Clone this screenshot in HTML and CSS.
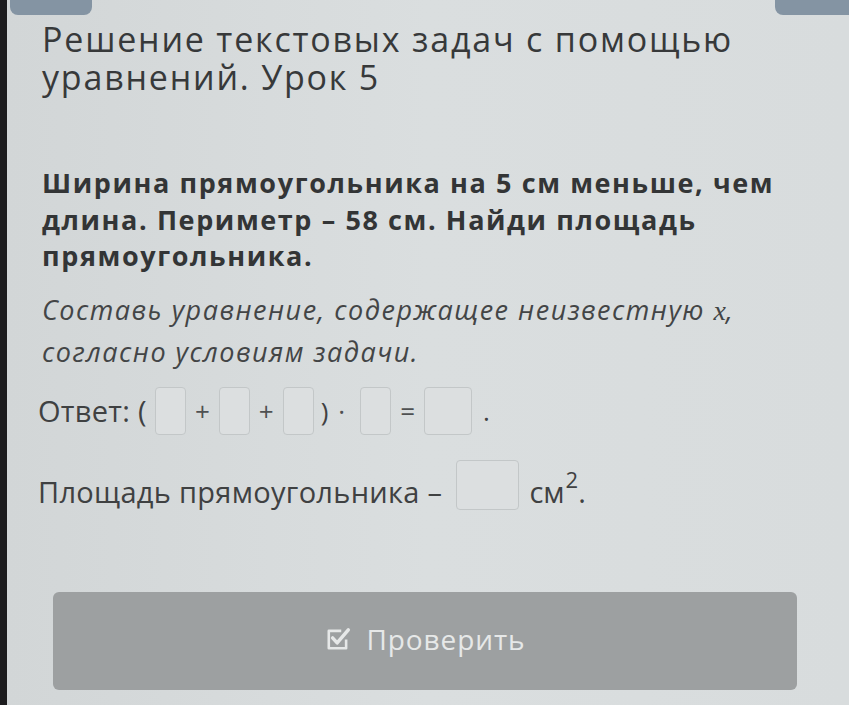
FILE: index.html
```html
<!DOCTYPE html>
<html lang="ru">
<head>
<meta charset="utf-8">
<title>Решение текстовых задач с помощью уравнений. Урок 5</title>
<link rel="stylesheet" href="styles.css">
</head>
<body>
<div class="frame">
  <div class="edge"></div>
  <main class="page">
    <div class="topbar">
      <span class="tab tab-left"></span>
      <span class="tab tab-right"></span>
    </div>
    <h1 class="title">Решение текстовых задач с помощью уравнений. Урок 5</h1>
    <p class="question">Ширина прямоугольника на 5 см меньше, чем длина. Периметр – 58 см. Найди площадь прямоугольника.</p>
    <p class="instruction">Составь уравнение, содержащее неизвестную <span class="var">x</span>, согласно условиям задачи.</p>
    <div class="answer">
      <span class="label">Ответ: (</span>
      <span class="box"></span>
      <span class="op">+</span>
      <span class="box"></span>
      <span class="op">+</span>
      <span class="box"></span>
      <span class="op paren">)</span>
      <span class="op dot">·</span>
      <span class="box after-dot"></span>
      <span class="op">=</span>
      <span class="box wide"></span>
      <span class="op end">.</span>
    </div>
    <div class="area">
      <span class="label">Площадь прямоугольника –</span>
      <span class="box big"></span>
      <span class="unit">см<sup>2</sup>.</span>
    </div>
    <div class="actions">
      <button class="check" type="button">
        <svg class="check-icon" viewBox="0 0 24 24" width="26" height="26" aria-hidden="true">
          <path d="M19.5 12.5V20.5H3.5V4.5H15" fill="none" stroke="currentColor" stroke-width="2.4" stroke-linejoin="round"/>
          <path d="M7 11l4.2 4.6L21.5 3.5" fill="none" stroke="currentColor" stroke-width="3.2" stroke-linecap="round" stroke-linejoin="round"/>
        </svg>
        <span>Проверить</span>
      </button>
    </div>
  </main>
</div>
</body>
</html>
```
FILE: styles.css
```css
* { box-sizing: border-box; }

html, body {
  margin: 0;
  height: 100%;
}

body {
  background: #d6dadb;
  font-family: "Open Sans", "Noto Sans", "DejaVu Sans", sans-serif;
  color: #3b3d3e;
  overflow: hidden;
}

.frame {
  display: flex;
  height: 705px;
}

.edge {
  width: 7px;
  background: #1c1c1e;
  flex: none;
}

.page {
  flex: 1;
  padding: 0 0 0 31px;
  background: linear-gradient(90deg, #d2d6d7 0%, #dadedf 50%, #d8dcdd 100%);
}

.topbar {
  display: flex;
  justify-content: space-between;
  height: 15px;
  margin-left: -28px;
}

.tab {
  display: block;
  height: 15px;
  background: #8494a3;
  border-radius: 0 0 8px 8px;
}

.tab-left { width: 82px; }
.tab-right { width: 74px; border-radius: 0 0 0 8px; }

.title {
  margin: 5px 0 0 4px;
  width: 780px;
  font-size: 34px;
  font-weight: 400;
  line-height: 38px;
  color: #37393a;
  letter-spacing: 1.8px;
}

.question {
  margin: 69px 0 0 4px;
  width: 790px;
  font-size: 27px;
  font-weight: 700;
  line-height: 36.5px;
  letter-spacing: 1.6px;
  color: #333536;
}

.instruction {
  margin: 14px 0 0 4px;
  width: 760px;
  font-size: 27px;
  font-style: italic;
  line-height: 42px;
  letter-spacing: 1.5px;
  color: #434546;
}

.var {
  font-family: "Liberation Serif", serif;
  font-style: italic;
  font-size: 28px;
  line-height: 1;
  letter-spacing: 0;
}

.answer {
  display: flex;
  align-items: center;
  margin-top: 13px;
  height: 50px;
}

.label {
  font-size: 29px;
  letter-spacing: 0.3px;
  color: #3f4142;
}

.answer .label { margin-right: 8px; }

.box {
  display: block;
  width: 31px;
  height: 48px;
  border: 1px solid #c3c7c8;
  border-radius: 4px;
  background: #dcdfe0;
  flex: none;
}

.box.wide { width: 48px; }
.box.big { width: 63px; height: 50px; }
.box.after-dot { margin-left: 15px; }

.op {
  font-size: 26px;
  color: #4f5152;
  margin: 0 9px;
}

.op.paren { margin: 0 0 0 7px; color: #3f4142; }
.op.dot { margin: 0 0 0 10px; }
.op.end { margin: 0 0 0 11px; color: #3f4142; }

.area {
  display: flex;
  align-items: flex-end;
  margin-top: 24px;
}

.area .label {
  margin-right: 14px;
  line-height: 29px;
  padding-bottom: 4px;
}

.unit {
  font-size: 29px;
  line-height: 29px;
  padding-bottom: 4px;
  color: #3f4142;
  margin-left: 10px;
}

.unit sup {
  font-size: 22px;
  line-height: 0;
  vertical-align: 0;
  position: relative;
  top: -15px;
  margin-left: 1px;
}

.actions {
  margin: 82px 0 0 15px;
  width: 744px;
}

.check {
  display: flex;
  align-items: center;
  justify-content: center;
  gap: 16px;
  width: 100%;
  height: 98px;
  border: none;
  border-radius: 6px;
  background: #9da0a1;
  color: #e6e8e8;
  font-family: "Open Sans", "Noto Sans", sans-serif;
  font-size: 28px;
  letter-spacing: 0.9px;
  padding: 0 0 4px 0;
}

.check-icon { width: 26px; height: 26px; }
```
